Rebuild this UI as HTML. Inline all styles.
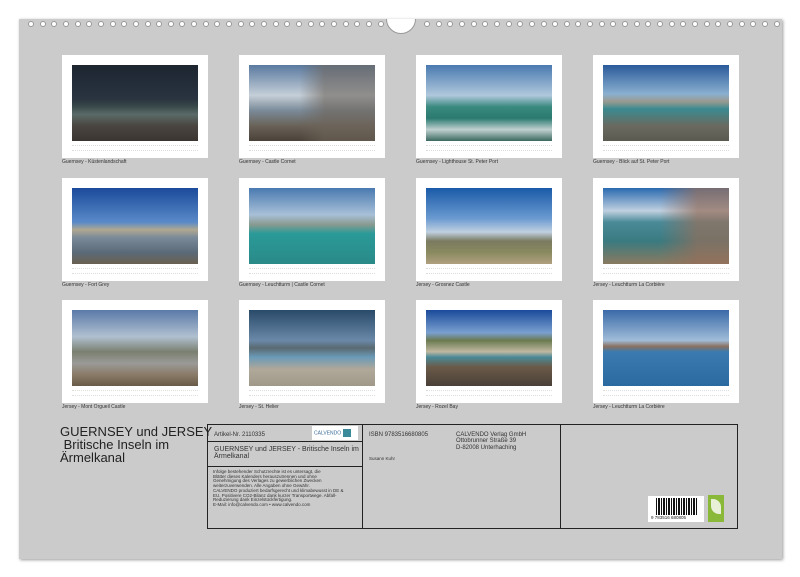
<!DOCTYPE html><html><head><meta charset="utf-8"><style>
*{margin:0;padding:0;box-sizing:border-box}
body{width:800px;height:577px;background:#fff;position:relative;overflow:hidden;font-family:"Liberation Sans",sans-serif}
.panel{position:absolute;left:19px;top:19px;width:763px;height:540px;background:#cbcbcb;box-shadow:1px 1px 3px #999}
.hole{position:absolute;top:21px;width:6px;height:6px;border-radius:50%;border:1px solid #999;background:#fff}
.notch{position:absolute;left:386px;top:4px;width:30px;height:30px;border-radius:50%;background:#fff;border:1px solid #999;clip-path:inset(15px 0 0 0)}
.card{position:absolute;width:146px;height:103px;background:#fff}
.img{position:absolute;left:10px;top:10px;width:126px;height:76px}
.cal{position:absolute;left:10px;top:90px;width:126px;height:6px;border-top:1px dotted #ddd;border-bottom:1px dotted #ddd}
.cap{position:absolute;font-size:5px;color:#333}
.box{position:absolute;border:1.5px solid #222}
.t{position:absolute;font-size:6px;color:#333;line-height:1.05}
</style></head><body>
<div class="panel"></div>
<div id="holes"></div>
<div class="notch"></div>
<script>
var h='';for(var i=0;i<31;i++){h+='<div class="hole" style="left:'+(28+i*11.65)+'px"></div>'}
for(var i=0;i<31;i++){h+='<div class="hole" style="left:'+(424+i*11.65)+'px"></div>'}
document.getElementById('holes').innerHTML=h;
</script>
<div class="card" style="left:62px;top:55px"><div class="img" style="background:linear-gradient(#1c2530 0%,#2a3440 45%,#3a4a4a 55%,#5a6a68 65%,#4a4540 80%,#3a3530)"></div><div class="cal"></div></div>
<div class="cap" style="left:62px;top:159px">Guernsey - Küstenlandschaft</div>
<div class="card" style="left:239px;top:55px"><div class="img" style="background:linear-gradient(90deg,rgba(0,0,0,0) 40%,rgba(110,100,90,.6) 60%),linear-gradient(#5a7aa0,#c5cfd8 40%,#7a8a98 60%,#6a6258 80%,#4a4238)"></div><div class="cal"></div></div>
<div class="cap" style="left:239px;top:159px">Guernsey - Castle Cornet</div>
<div class="card" style="left:416px;top:55px"><div class="img" style="background:linear-gradient(#4a7ab0,#b0c8dc 40%,#3a8a80 55%,#2a7a70 70%,#c0d0d0 85%,#3a6a60)"></div><div class="cal"></div></div>
<div class="cap" style="left:416px;top:159px">Guernsey - Lighthouse St. Peter Port</div>
<div class="card" style="left:593px;top:55px"><div class="img" style="background:linear-gradient(#2a5a9a,#8ab0d0 38%,#9a9a90 48%,#3a8a90 58%,#6a6a60 80%,#5a5a50)"></div><div class="cal"></div></div>
<div class="cap" style="left:593px;top:159px">Guernsey - Blick auf St. Peter Port</div>
<div class="card" style="left:62px;top:178px"><div class="img" style="background:linear-gradient(#1a4a9a,#5a8ac8 45%,#b0a890 55%,#7a8a98 65%,#5a6a78 85%,#6a6050)"></div><div class="cal"></div></div>
<div class="cap" style="left:62px;top:282px">Guernsey - Fort Grey</div>
<div class="card" style="left:239px;top:178px"><div class="img" style="background:linear-gradient(#4a7ab0,#a8c0d8 35%,#8a9a90 48%,#2a9a98 60%,#2a8a88 100%)"></div><div class="cal"></div></div>
<div class="cap" style="left:239px;top:282px">Guernsey - Leuchtturm | Castle Cornet</div>
<div class="card" style="left:416px;top:178px"><div class="img" style="background:linear-gradient(#1a5aa8,#6a9ad0 40%,#c0d0e0 58%,#7a7a60 70%,#8a8a60 85%,#b0a080)"></div><div class="cal"></div></div>
<div class="cap" style="left:416px;top:282px">Jersey - Grosnez Castle</div>
<div class="card" style="left:593px;top:178px"><div class="img" style="background:linear-gradient(90deg,rgba(0,0,0,0) 45%,rgba(150,110,90,.7) 75%),linear-gradient(#2a6ab0,#c0d0e0 30%,#4a8a98 45%,#3a7a80 70%,#8a7a60)"></div><div class="cal"></div></div>
<div class="cap" style="left:593px;top:282px">Jersey - Leuchtturm La Corbière</div>
<div class="card" style="left:62px;top:300px"><div class="img" style="background:linear-gradient(#5a7aa8,#b0c0d0 35%,#7a8070 55%,#9a9a98 70%,#8a7a68 85%,#6a5a48)"></div><div class="cal"></div></div>
<div class="cap" style="left:62px;top:404px">Jersey - Mont Orgueil Castle</div>
<div class="card" style="left:239px;top:300px"><div class="img" style="background:linear-gradient(#2a4a6a,#6a88a8 40%,#5a6a70 50%,#6a9ab8 62%,#b0a898 78%,#a09888)"></div><div class="cal"></div></div>
<div class="cap" style="left:239px;top:404px">Jersey - St. Helier</div>
<div class="card" style="left:416px;top:300px"><div class="img" style="background:linear-gradient(#1a4a9a,#7aa0d0 30%,#6a7a50 40%,#c0b8a0 55%,#4a8a98 62%,#6a5a48 75%,#4a4038)"></div><div class="cal"></div></div>
<div class="cap" style="left:416px;top:404px">Jersey - Rozel Bay</div>
<div class="card" style="left:593px;top:300px"><div class="img" style="background:linear-gradient(#3a6aa8,#a0bcd8 40%,#8a7060 48%,#3a7ab0 55%,#2a6aa0 100%)"></div><div class="cal"></div></div>
<div class="cap" style="left:593px;top:404px">Jersey - Leuchtturm La Corbière</div>
<div style="position:absolute;left:60px;top:425px;font-size:13px;line-height:13px;color:#222">GUERNSEY und JERSEY<br>&nbsp;Britische Inseln im<br>Ärmelkanal</div>
<div class="box" style="left:207px;top:424px;width:531px;height:105px"></div>
<div class="box" style="left:362px;top:424px;width:0;height:105px;border-width:0 0 0 1.5px"></div>
<div class="box" style="left:560px;top:424px;width:0;height:105px;border-width:0 0 0 1.5px"></div>
<div class="box" style="left:207px;top:441px;width:156px;height:26px;border-width:1px 0 1px 0"></div>
<div class="t" style="left:214px;top:432px">Artikel-Nr. 2110335</div>
<div style="position:absolute;left:312px;top:426px;width:46px;height:14px;background:#fff;font-size:5px;color:#3a6a9a;padding:3px 2px">CALVENDO<span style="display:inline-block;width:8px;height:8px;background:#3a8a9a;margin-left:2px;vertical-align:middle"></span></div>
<div class="t" style="left:214px;top:446px;font-size:7px">GUERNSEY und JERSEY - Britische Inseln im<br>Ärmelkanal</div>
<div class="t" style="left:213px;top:470px;font-size:4.5px">Infolge bestehender Schutzrechte ist es untersagt, die<br>Blätter dieses Kalenders herauszutrennen und ohne<br>Genehmigung des Verlages zu gewerblichen Zwecken<br>weiterzuverwenden. Alle Angaben ohne Gewähr.<br>CALVENDO produziert bedarfsgerecht und klimabewusst in DE &amp;<br>EU. Positivere CO2-Bilanz dank kurzer Transportwege. Abfall-<br>Reduzierung dank Einzelstückfertigung.<br>E-Mail: info@calvendo.com • www.calvendo.com</div>
<div class="t" style="left:369px;top:432px">ISBN 9783516680805</div>
<div class="t" style="left:369px;top:457px;font-size:4.5px">Susann Kuhr</div>
<div class="t" style="left:456px;top:432px">CALVENDO Verlag GmbH<br>Ottobrunner Straße 39<br>D-82008 Unterhaching</div>
<div style="position:absolute;left:648px;top:496px;width:56px;height:26px;background:#fff"><div style="position:absolute;left:8px;top:2px;width:42px;height:17px;background:repeating-linear-gradient(90deg,#111 0 1px,#fff 1px 2px,#111 2px 4px,#fff 4px 5px)"></div><div style="position:absolute;left:3px;top:19px;font-size:4.5px;color:#222">9 783516 680805</div></div>
<div style="position:absolute;left:708px;top:495px;width:16px;height:27px;background:#8ab838"><div style="position:absolute;left:3px;top:4px;width:10px;height:15px;background:#e8f0d8;border-radius:0 8px 0 8px"></div></div>
</body></html>
